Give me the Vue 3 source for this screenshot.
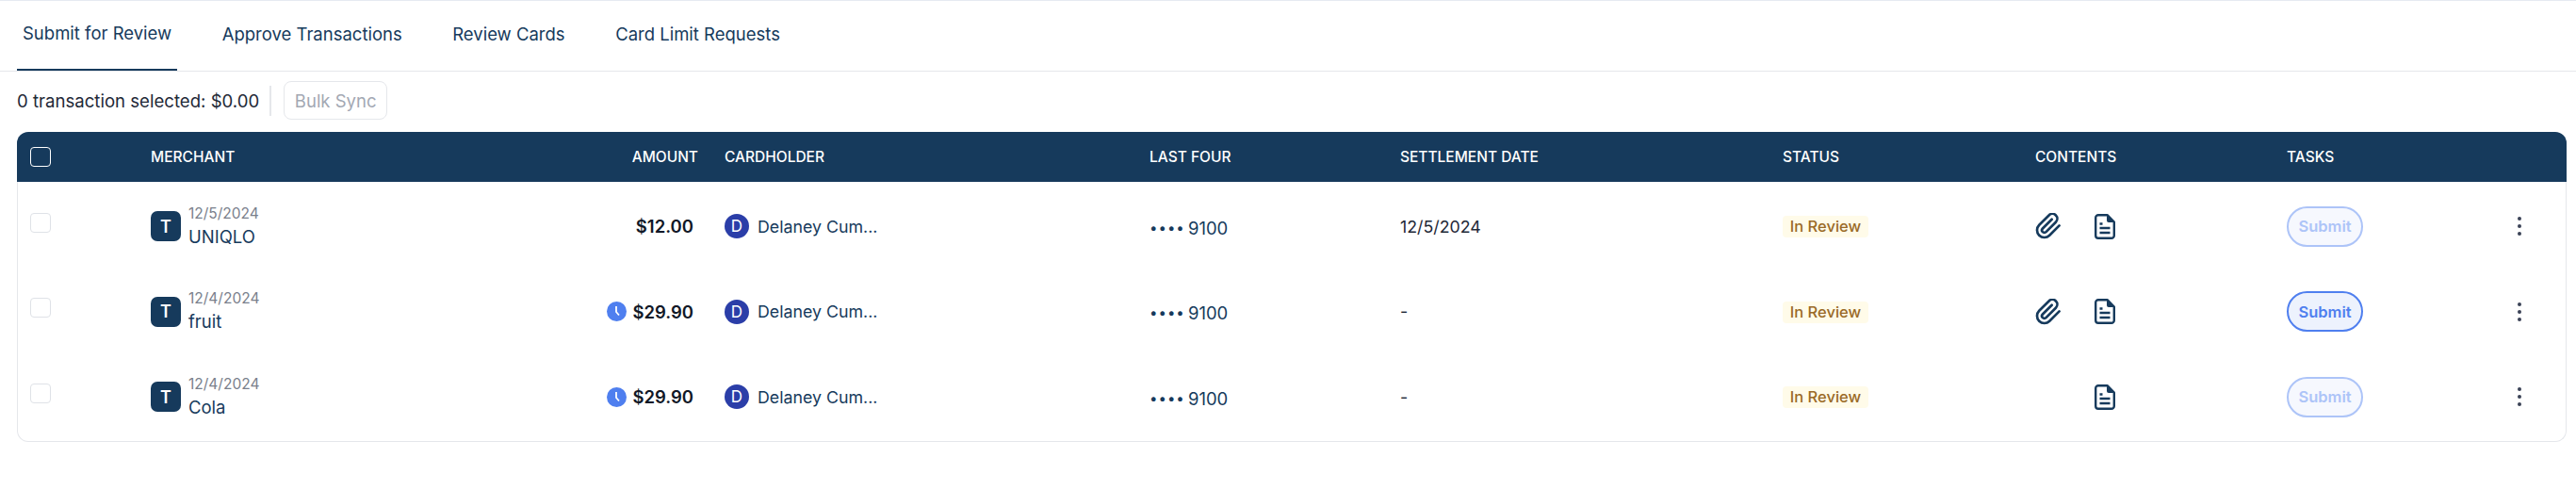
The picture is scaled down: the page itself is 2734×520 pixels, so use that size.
<script setup>
const tabs = ['Submit for Review', 'Approve Transactions', 'Review Cards', 'Card Limit Requests']
const columns = ['MERCHANT', 'AMOUNT', 'CARDHOLDER', 'LAST FOUR', 'SETTLEMENT DATE', 'STATUS', 'CONTENTS', 'TASKS']
const rows = [
  { date: '12/5/2024', merchant: 'UNIQLO', amount: '$12.00', pending: false, settled: '12/5/2024', clip: true, canSubmit: false },
  { date: '12/4/2024', merchant: 'fruit', amount: '$29.90', pending: true, settled: '-', clip: true, canSubmit: true },
  { date: '12/4/2024', merchant: 'Cola', amount: '$29.90', pending: true, settled: '-', clip: false, canSubmit: false }
]
</script>

<template>
  <div class="page">
    <nav class="tabs">
      <a v-for="(tab, i) in tabs" :key="tab" class="tab" :class="{ active: i === 0 }">{{ tab }}</a>
    </nav>

    <div class="toolbar">
      <span class="selected">0 transaction selected: $0.00</span>
      <span class="divider"></span>
      <button class="bulk" disabled>Bulk Sync</button>
    </div>

    <div class="card">
      <div class="grid head">
        <div class="check-cell"><span class="box head-box"></span></div>
        <div v-for="col in columns" :key="col" :class="{ right: col === 'AMOUNT', gap: col === 'CARDHOLDER' }">{{ col }}</div>
        <div></div>
      </div>

      <div class="body">
        <div v-for="row in rows" :key="row.merchant" class="grid row">
          <div class="check-cell"><span class="box row-box"></span></div>
          <div class="merchant">
            <span class="logo">T</span>
            <div class="names">
              <div class="date">{{ row.date }}</div>
              <div class="name">{{ row.merchant }}</div>
            </div>
          </div>
          <div class="amount">
            <svg v-if="row.pending" class="clock" viewBox="0 0 21 21">
              <circle cx="10.5" cy="10.5" r="10.5" fill="#4f7fef" />
              <path d="M10 5v6l3 3.5" fill="none" stroke="#fff" stroke-width="1.8" />
            </svg>
            <span>{{ row.amount }}</span>
          </div>
          <div class="holder gap">
            <span class="initial">D</span>
            <span>Delaney Cum...</span>
          </div>
          <div class="four"><span class="dots">••••</span> 9100</div>
          <div class="settled">{{ row.settled }}</div>
          <div><span class="pill">In Review</span></div>
          <div class="contents">
            <span class="clip-slot">
              <svg v-if="row.clip" class="clip" viewBox="3 3 23 23" fill="none" stroke="#163a5c" stroke-width="2.2" stroke-linecap="round" stroke-linejoin="round">
                <path d="M17.5 8.5l-8 8a2.1 2.1 0 0 0 3 3l8.5-8.5a4.2 4.2 0 0 0-6-6l-8.500 8.500a6.300 6.300 0 0 0 9 9l8.500-8.500" />
              </svg>
            </span>
            <svg class="doc" viewBox="0 0 22 27">
              <path d="M4 1.200h9.500l7.300 7.300V23a2.800 2.800 0 0 1-2.800 2.800H4A2.800 2.800 0 0 1 1.200 23V4A2.800 2.800 0 0 1 4 1.200z" fill="none" stroke="#163a5c" stroke-width="2.400" stroke-linejoin="round" />
              <path d="M13 1.500l7.500 7.500H15a2 2 0 0 1-2-2z" fill="#163a5c" />
              <path d="M5.500 10.500h3M5.500 15h11M5.500 20h11" stroke="#163a5c" stroke-width="2.400" />
            </svg>
          </div>
          <div><button class="submit" :class="{ off: !row.canSubmit }">Submit</button></div>
          <div class="more"><i></i><i></i><i></i></div>
        </div>
      </div>
    </div>
  </div>
</template>

<style>
body { background: #fff; }
</style>

<style scoped>
.page { width: 2734px; height: 520px; box-sizing: border-box; border-top: 1px solid #e6eaf1; padding: 0 10px 0 18px; font-family: Inter, "Liberation Sans", sans-serif; color: #163a5c; font-size: 18.5px; }
.tabs { display: flex; gap: 41.5px; height: 74px; border-bottom: 1px solid #e5e7eb; margin-left: -18px; margin-right: -10px; padding-left: 18px; }
.tab { display: flex; align-items: center; padding: 0 6px 5px; height: 74px; box-sizing: border-box; }
.tab.active { border-bottom: 2px solid #163a5c; }
.toolbar { display: flex; align-items: center; height: 41px; margin-top: 10px; }
.selected { color: #1f2937; font-size: 18.6px; }
.divider { width: 2px; height: 32px; background: #e5e7eb; margin: 0 13px 0 11px; }
.bulk { width: 110px; height: 41px; background: #fff; border: 1px solid #e5e7eb; border-radius: 8px; color: #a3a8b3; font: inherit; padding: 0; }
.card { margin-top: 13px; border: 1px solid #e5e7eb; border-top: 0; border-radius: 12px; height: 329px; box-sizing: border-box; }
.grid { display: grid; grid-template-columns: 141px 450px 131px 479px 266px 406px 268px 267px 245px 1fr; align-items: center; }
.gap { padding-left: 28px; }
.head { height: 53px; background: #163a5c; border-radius: 12px 12px 0 0; color: #fff; font-size: 15.5px; font-weight: 500; margin: 0 -1px; grid-template-columns: 142px 450px 131px 479px 266px 406px 268px 267px 245px 1fr; }
.right { text-align: right; }
.check-cell { padding-left: 13px; display: flex; }
.box { display: block; width: 22px; height: 21px; box-sizing: border-box; border-radius: 4px; }
.head-box { border: 1px solid #fff; margin-left: 1px; }
.row-box { border: 1px solid #dfe2e7; margin-top: -8px; }
.body { padding: 2px 0 3px; }
.row { height: 90.5px; }
.merchant { display: flex; align-items: center; gap: 8px; }
.logo { width: 32px; height: 32px; border-radius: 7px; background: #163a5c; color: #fff; display: flex; align-items: center; justify-content: center; font-weight: 600; font-size: 18px; }
.names { margin-top: -3px; }
.date { color: #7a808c; font-size: 15.5px; line-height: 24px; }
.name { line-height: 24px; }
.amount { display: flex; justify-content: flex-end; align-items: center; gap: 6px; font-weight: 600; color: #111827; padding-right: 5px; }
.clock { width: 21px; height: 21px; }
.holder { display: flex; align-items: center; gap: 9px; font-size: 17.8px; }
.initial { width: 26px; height: 26px; border-radius: 50%; background: #2b3ea8; color: #fff; display: flex; align-items: center; justify-content: center; font-size: 17px; }
.four { padding-top: 3px; word-spacing: -2px; }
.dots { font-size: 15px; letter-spacing: 1px; vertical-align: 2px; }
.settled { color: #1f2937; font-size: 17.8px; }
.pill { display: inline-block; width: 91px; height: 23px; line-height: 23px; text-align: center; border-radius: 4px; background: #fffbe9; color: #9a6a27; font-size: 16.5px; font-weight: 500; }
.contents { display: flex; align-items: center; }
.clip-slot { width: 63px; height: 28px; display: block; }
.clip { width: 28px; height: 28px; display: block; }
.doc { width: 22px; height: 27px; display: block; }
.submit { width: 81px; height: 43px; border-radius: 22px; border: 2px solid #4f7fef; background: #edf2fd; color: #4f7fef; font: inherit; font-size: 16.5px; font-weight: 600; padding: 0; }
.submit.off { border-color: #adc4f8; background: #f6f8fe; color: #adc4f8; }
.more { display: flex; flex-direction: column; align-items: center; gap: 4px; width: 4px; }
.more i { width: 4px; height: 4px; border-radius: 50%; background: #3a4256; display: block; }
</style>
